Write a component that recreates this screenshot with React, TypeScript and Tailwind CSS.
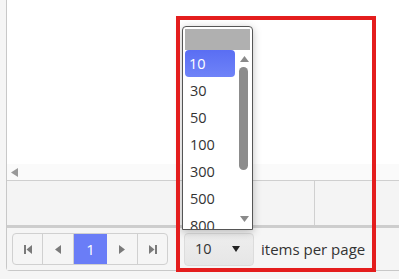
const font = { fontFamily: '"Open Sans", "Liberation Sans", sans-serif' };

function FirstIcon() {
  return (
    <svg width="8" height="9" viewBox="0 0 8 9">
      <rect x="0" y="0" width="2" height="9" fill="#7a7a7a" />
      <polygon points="8,0 8,9 2.5,4.5" fill="#7a7a7a" />
    </svg>
  );
}

function LastIcon() {
  return (
    <svg width="8" height="9" viewBox="0 0 8 9">
      <polygon points="0,0 0,9 5.5,4.5" fill="#7a7a7a" />
      <rect x="6" y="0" width="2" height="9" fill="#7a7a7a" />
    </svg>
  );
}

function PrevIcon() {
  return (
    <svg width="6" height="9" viewBox="0 0 6 9">
      <polygon points="6,0 6,9 0,4.5" fill="#7a7a7a" />
    </svg>
  );
}

function NextIcon() {
  return (
    <svg width="6" height="9" viewBox="0 0 6 9">
      <polygon points="0,0 0,9 6,4.5" fill="#7a7a7a" />
    </svg>
  );
}

const sizes = ["10", "30", "50", "100", "300", "500", "800"];

function SizeList() {
  return (
    <div className="absolute left-[182px] top-[26px] w-[71px] h-[204px] bg-white border border-[#555] rounded-t-[4px] shadow-[0_2px_8px_rgba(0,0,0,0.25)] overflow-hidden">
      <div className="mx-[2px] mt-[2px] h-[21px] bg-[#b0b0b0]" />
      <div className="flex">
        <div className="flex flex-col w-[50px] ml-[2px]">
          {sizes.map((s, i) => (
            <div
              key={s}
              className={
                i === 0
                  ? "h-[27px] flex items-center pl-[4px] rounded-[4px] text-white bg-gradient-to-b from-[#5a6ef3] to-[#6f83f8] text-[14.5px]"
                  : "h-[27px] flex items-center pl-[5px] text-[#333] text-[14.5px]"
              }
            >
              {s}
            </div>
          ))}
        </div>
        <div className="relative w-[12px] ml-[3px]">
          <svg className="absolute left-[2px] top-[6px]" width="9" height="6" viewBox="0 0 9 6">
            <polygon points="0,6 9,6 4.5,0" fill="#8a8a8a" />
          </svg>
          <div className="absolute left-[1px] top-[17px] w-[9px] h-[103px] rounded-full bg-[#8c8c8c]" />
          <svg className="absolute left-[2px] top-[166px]" width="9" height="6" viewBox="0 0 9 6">
            <polygon points="0,0 9,0 4.5,6" fill="#8a8a8a" />
          </svg>
        </div>
      </div>
    </div>
  );
}

export default function App() {
  const btn = "h-full flex items-center justify-center border-r border-[#d0d0d0]";
  return (
    <div className="relative w-[399px] h-[279px] bg-[#f5f5f5] overflow-hidden pl-[6px]" style={font}>
      <div className="w-[400px] h-[271px] flex flex-col border-l border-b border-[#c8c8c8] rounded-bl-[4px]">
        <div className="flex-1 bg-white" />
        <div className="h-[17px] bg-[#fafafa] flex items-center pl-[4px] border-b border-[#cfcfcf]">
          <svg width="7" height="9" viewBox="0 0 7 9">
            <polygon points="7,0 7,9 0,4.5" fill="#999" />
          </svg>
        </div>
        <div className="h-[44px] bg-[#f4f4f4] flex border-b-[3px] border-[#cdcdcd] box-content">
          <div className="w-[308px] h-full border-r border-[#d0d0d0]" />
        </div>
        <div className="h-[42px] bg-[#f5f5f5] flex items-center pl-[5px] text-[14px]">
          <div className="flex h-[32px] border border-[#d0d0d0] rounded-[4px] overflow-hidden bg-[#f5f5f5]">
            <div className={btn + " w-[30px]"}><FirstIcon /></div>
            <div className={btn + " w-[31px]"}><PrevIcon /></div>
            <div className="h-full w-[33px] flex items-center justify-center bg-[#6a7df7] text-white text-[15px]">1</div>
            <div className={btn + " w-[31px]"}><NextIcon /></div>
            <div className="h-full w-[29px] flex items-center justify-center"><LastIcon /></div>
          </div>
          <div className="ml-[16px] h-[33px] w-[70px] flex items-center justify-between pl-[10px] pr-[13px] rounded-[4px] border border-[#dcdcdc] bg-gradient-to-b from-[#eeeeee] to-[#e6e6e6] text-[#333] text-[14.5px]">
            <span>10</span>
            <svg width="8" height="6" viewBox="0 0 8 6">
              <polygon points="0,0 8,0 4,6" fill="#222" />
            </svg>
          </div>
          <span className="ml-[7px] text-[#333] text-[15px]">items per page</span>
        </div>
      </div>
      <SizeList />
      <div className="absolute left-[176px] top-[16px] w-[200px] h-[256px] border-[4px] border-[#e41d1d]" />
    </div>
  );
}
